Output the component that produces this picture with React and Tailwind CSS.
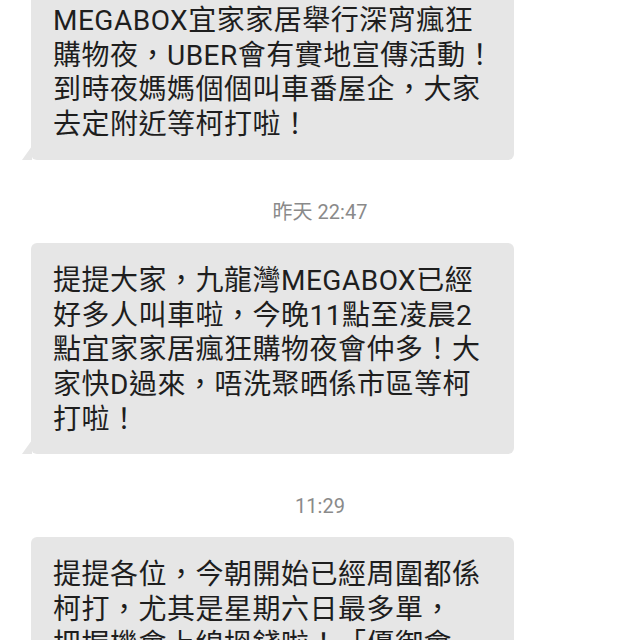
import React from 'react';

const messages = [
  {
    time: null,
    lines: [
      'MEGABOX宜家家居舉行深宵瘋狂',
      '購物夜，UBER會有實地宣傳活動！',
      '到時夜媽媽個個叫車番屋企，大家',
      '去定附近等柯打啦！',
    ],
  },
  {
    time: '昨天 22:47',
    lines: [
      '提提大家，九龍灣MEGABOX已經',
      '好多人叫車啦，今晚11點至凌晨2',
      '點宜家家居瘋狂購物夜會仲多！大',
      '家快D過來，唔洗聚晒係市區等柯',
      '打啦！',
    ],
  },
  {
    time: '11:29',
    lines: [
      '提提各位，今朝開始已經周圍都係',
      '柯打，尤其是星期六日最多單，',
      '把握機會上線搵錢啦！「優御會',
    ],
  },
];

const Bubble = ({ lines }) => (
  <div className="relative ml-[31px] w-[483px] rounded-[6px] bg-[#e6e6e6] pl-[22px] pr-3 pt-[21px] pb-[17px]">
    {lines.map((line, i) => (
      <div key={i} className="whitespace-nowrap text-[28px] leading-[34.7px] tracking-[0.5px] text-[#1e1e1e]">
        {line}
      </div>
    ))}
    {/* tail */}
    <div className="absolute bottom-0 left-[-9px] h-0 w-0 border-b-[14px] border-l-[10px] border-b-[#e6e6e6] border-l-transparent" />
  </div>
);

export default function App() {
  return (
    <div
      className="h-[640px] w-[640px] overflow-hidden bg-white"
      style={{ fontFamily: 'Roboto, "Noto Sans CJK TC", sans-serif' }}
    >
      <div className="mt-[-17px] flex flex-col">
        {messages.map((m, i) => (
          <div key={i} className="flex flex-col">
            {m.time && (
              <div className="mt-[40px] mb-[19px] text-center text-[20px] leading-[24px] text-[#8a8a8a]">
                {m.time}
              </div>
            )}
            <Bubble lines={m.lines} />
          </div>
        ))}
      </div>
    </div>
  );
}
